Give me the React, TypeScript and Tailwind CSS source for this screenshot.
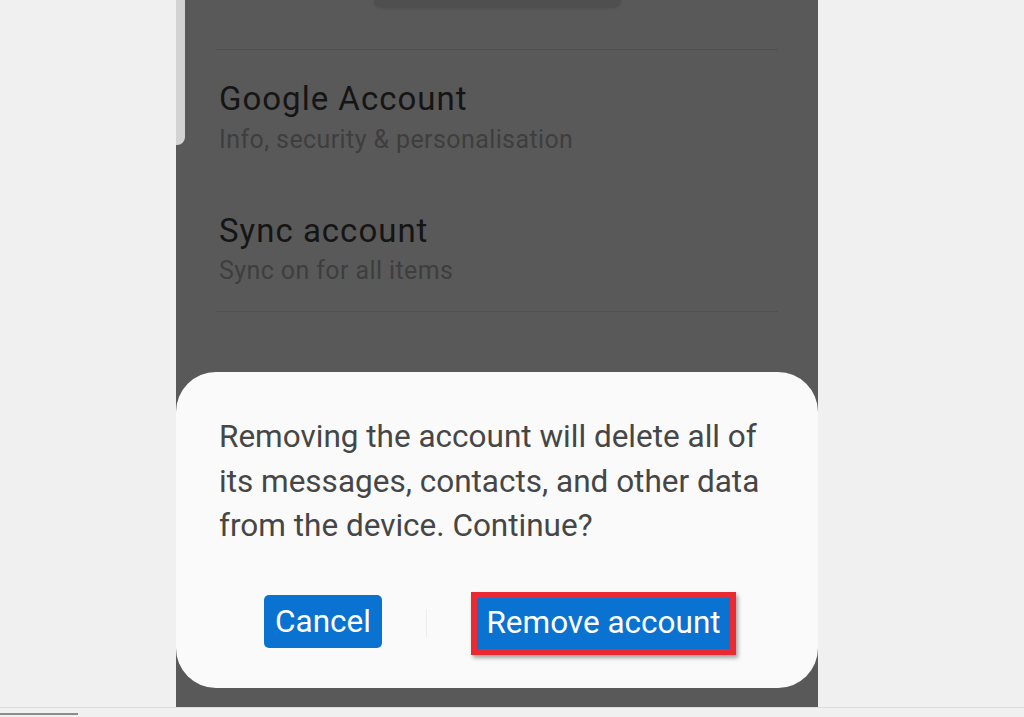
import React from "react";

export default function App() {
  return (
    <div
      className="w-full h-[717px] bg-[#f0f0f0] flex flex-col overflow-hidden"
      style={{ fontFamily: "Roboto, 'Noto Sans', sans-serif" }}
    >
      <div className="flex h-[707px]">
        <div className="w-[176px] shrink-0" />
        <div className="relative w-[642px] shrink-0 h-full bg-[#595959] flex flex-col">
          <div className="absolute left-0 top-0 w-[9px] h-[145px] bg-[#d3d3d3] rounded-br-[8px]" />
          <div className="mx-auto w-[247px] h-[7px] bg-[#4f4f4f] rounded-b-[10px] shadow-[0_1px_3px_rgba(0,0,0,0.15)]" />
          <div className="mx-[40px] mt-[42px] h-px bg-[#4f4f4f]" />
          <div className="pl-[43px] pt-[31px] flex flex-col">
            <div className="text-[33px] leading-[36px] tracking-[1px] text-[#151515]">Google Account</div>
            <div className="mt-[9px] text-[25px] leading-[28px] tracking-[0.4px] text-[#3e3e3e]">
              Info, security &amp; personalisation
            </div>
            <div className="mt-[59px] text-[33px] leading-[36px] tracking-[1px] text-[#151515]">Sync account</div>
            <div className="mt-[8px] text-[25px] leading-[28px] tracking-[0.4px] text-[#3e3e3e]">Sync on for all items</div>
          </div>
          <div className="mx-[40px] mt-[26px] h-px bg-[#4f4f4f]" />
          <div className="mt-auto mb-[19px] h-[316px] bg-[#fafafa] rounded-[40px] flex flex-col">
            <p className="pl-[43px] pr-[30px] pt-[43px] text-[31.5px] leading-[44.5px] text-[#464646] whitespace-nowrap">
              Removing the account will delete all of
              <br />
              its messages, contacts, and other data
              <br />
              from the device. Continue?
            </p>
            <div className="mt-[43px] flex items-center pl-[88px] gap-[44px]">
              <div className="mb-[3px] w-[118px] h-[53px] rounded-[5px] bg-[#0a72d1] flex items-center justify-center text-white text-[31.5px]">
                Cancel
              </div>
              <div className="w-px h-[28px] bg-[#ececec]" />
              <div className="w-[265px] h-[63px] border-[6px] border-[#ea2a33] bg-[#0a72d1] flex items-center justify-center text-white text-[31.5px] shadow-[2px_3px_4px_rgba(0,0,0,0.35)]">
                Remove account
              </div>
            </div>
          </div>
        </div>
        <div className="flex-1" />
      </div>
      <div className="h-px bg-[#dcdcdc]" />
      <div className="relative flex-1">
        <div className="absolute left-0 top-[5px] w-[78px] h-[2px] bg-[#8c8c8c]" />
      </div>
    </div>
  );
}
